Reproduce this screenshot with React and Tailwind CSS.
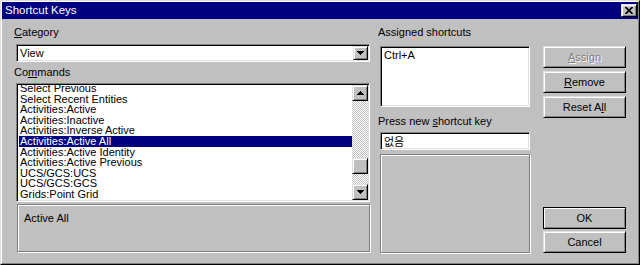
const commands = [
  'Select Previous',
  'Select Recent Entities',
  'Activities:Active',
  'Activities:Inactive',
  'Activities:Inverse Active',
  'Activities:Active All',
  'Activities:Active Identity',
  'Activities:Active Previous',
  'UCS/GCS:UCS',
  'UCS/GCS:GCS',
  'Grids:Point Grid',
];

const sunken =
  'border border-t-[#808080] border-l-[#808080] border-r-white border-b-white shadow-[inset_1px_1px_0_#000,inset_-1px_-1px_0_#dfdfdf]';
const raised =
  'border border-t-[#dfdfdf] border-l-[#dfdfdf] border-r-black border-b-black shadow-[inset_1px_1px_0_#fff,inset_-1px_-1px_0_#808080]';
const etched = 'border border-[#808080] shadow-[inset_1px_1px_0_#fff,1px_1px_0_#fff]';

function Arrow({ up }) {
  return (
    <svg width="7" height="4" viewBox="0 0 7 4" className="block">
      <path d={up ? 'M3.5 0 L7 4 L0 4 Z' : 'M0 0 L7 0 L3.5 4 Z'} fill="#000" shapeRendering="crispEdges" />
    </svg>
  );
}

function ArrowButton({ up }) {
  return (
    <div className={`flex h-[16px] w-[16px] shrink-0 items-center justify-center bg-[#c0c0c0] ${raised}`}>
      <Arrow up={up} />
    </div>
  );
}

function Button({ children, disabled, isDefault }) {
  return (
    <div
      className={`flex h-[22px] w-[83px] items-center justify-center bg-[#c0c0c0] text-[11px] ${
        isDefault
          ? 'border border-black shadow-[inset_1px_1px_0_#fff,inset_-1px_-1px_0_#808080]'
          : raised
      } ${disabled ? 'text-[#808080] [text-shadow:1px_1px_0_#fff]' : 'text-black'}`}
    >
      {children}
    </div>
  );
}

export default function App() {
  return (
    <div className="h-[265px] w-[640px] overflow-hidden border border-t-[#dfdfdf] border-l-[#dfdfdf] border-r-black border-b-black bg-[#c0c0c0] font-['Liberation_Sans',Arial,sans-serif] text-[11px] text-black">
      <div className="flex h-full flex-col border border-t-white border-l-white border-r-[#808080] border-b-[#808080]">
        {/* title bar */}
        <div className="flex h-[17px] items-start justify-between bg-[#000080] pl-[3px] pr-[1px]">
          <span className="mt-[2px] text-[11.5px] leading-[13px] text-white">Shortcut Keys</span>
          <div className={`mt-[2px] flex h-[13px] w-[16px] items-center justify-center bg-[#c0c0c0] ${raised}`}>
            <svg width="8" height="7" viewBox="0 0 8 7">
              <path d="M0.5 0 L7.5 7 M7.5 0 L0.5 7" stroke="#000" strokeWidth="1.6" />
            </svg>
          </div>
        </div>

        <div className="flex pl-[12px] pt-[7px]">
          {/* left column */}
          <div className="flex w-[356px] flex-col">
            <div className="h-[13px] leading-[13px]">
              <span className="underline underline-offset-[1px]">C</span>ategory
            </div>
            <div className={`ml-[2px] mt-[5px] flex h-[18px] items-center bg-white ${sunken}`}>
              <span className="flex-1 pl-[3px] leading-[13px]">View</span>
              <div className={`mr-[1px] flex h-[14px] w-[15px] items-center justify-center bg-[#c0c0c0] ${raised}`}>
                <Arrow />
              </div>
            </div>
            <div className="mt-[4px] h-[13px] leading-[13px]">
              Co<span className="underline underline-offset-[1px]">m</span>mands
            </div>
            <div className={`ml-[2px] mt-[4px] flex h-[119px] bg-white p-[1px] ${sunken}`}>
              <div className="flex-1 overflow-hidden">
                <div className="mt-[-2px]">
                  {commands.map((c) => (
                    <div
                      key={c}
                      className={`ml-[1px] h-[10.6px] whitespace-nowrap pl-[1px] leading-[10.6px] ${
                        c === 'Activities:Active All' ? 'bg-[#000080] text-white' : ''
                      }`}
                    >
                      {c}
                    </div>
                  ))}
                </div>
              </div>
              <div className="flex w-[16px] flex-col bg-[repeating-conic-gradient(#c0c0c0_0_25%,#fff_0_50%)] bg-[length:2px_2px]">
                <ArrowButton up />
                <div className="flex-1">
                  <div className={`mt-[57px] h-[16px] w-[16px] bg-[#c0c0c0] ${raised}`} />
                </div>
                <ArrowButton />
              </div>
            </div>
            <div className={`ml-[3px] mt-[2px] h-[48px] pl-[6px] pt-[7px] leading-[13px] ${etched}`}>Active All</div>
          </div>

          {/* middle column */}
          <div className="ml-[8px] flex w-[152px] flex-col">
            <div className="h-[13px] leading-[13px]">Assigned shortcuts</div>
            <div className={`ml-[2px] mt-[7px] h-[61px] bg-white pl-[3px] pt-[2px] leading-[12px] ${sunken}`}>Ctrl+A</div>
            <div className="mt-[8px] h-[13px] leading-[13px]">
              Press new <span className="underline underline-offset-[1px]">s</span>hortcut key
            </div>
            <div className={`ml-[2px] mt-[4px] flex h-[18px] items-center bg-white pl-[3px] font-['Noto_Sans_CJK_KR',sans-serif] text-[11px] ${sunken}`}>
              없음
            </div>
            <div className={`ml-[2px] mt-[4px] h-[99px] ${etched}`} />
          </div>

          {/* buttons */}
          <div className="ml-[13px] flex h-[227px] w-[83px] flex-col justify-between">
            <div className="mt-[20px] flex flex-col gap-[3px]">
              <Button disabled>
                <span className="underline underline-offset-[1px]">A</span>ssign
              </Button>
              <Button>
                <span className="underline underline-offset-[1px]">R</span>emove
              </Button>
              <Button>
                Reset A<span className="underline underline-offset-[1px]">l</span>l
              </Button>
            </div>
            <div className="flex flex-col gap-[2px]">
              <Button isDefault>OK</Button>
              <Button>Cancel</Button>
            </div>
          </div>
        </div>
      </div>
    </div>
  );
}
